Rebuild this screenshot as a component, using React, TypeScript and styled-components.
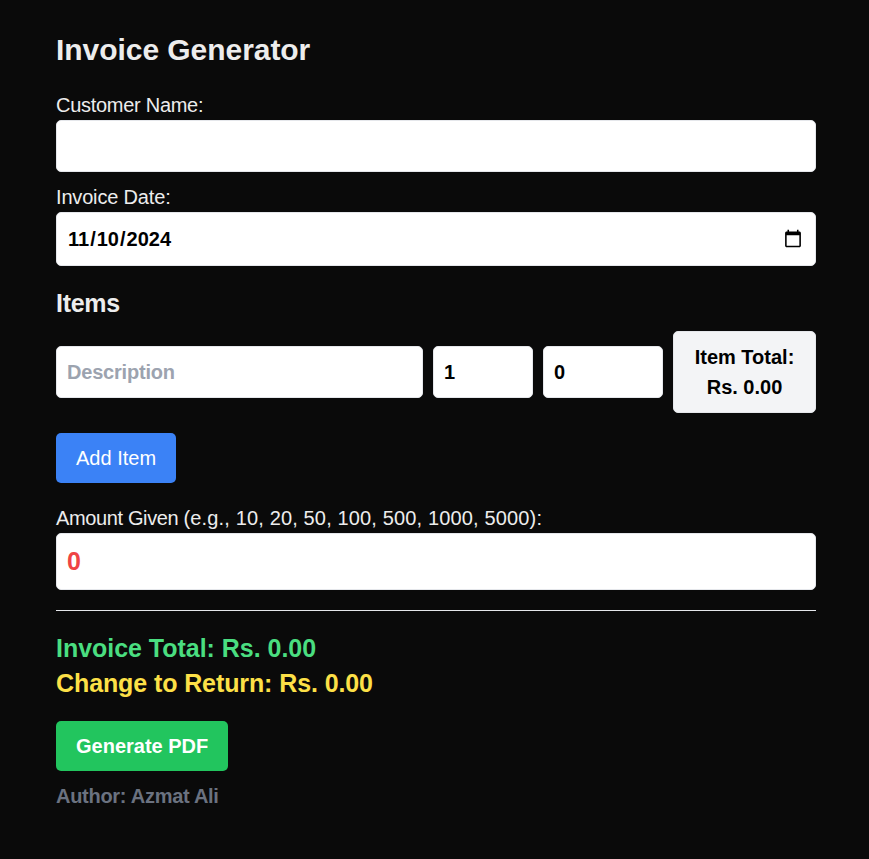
import React, { useState } from 'react';
import styled, { createGlobalStyle } from 'styled-components';

const GlobalStyle = createGlobalStyle`
  *, *::before, *::after { box-sizing: border-box; }
  body {
    margin: 0;
    background: #0a0a0a;
    color: #ededed;
    font: 20px/30px "Liberation Sans", Arial, sans-serif;
  }
  input, button { font: inherit; margin: 0; }
`;

const Page = styled.main`
  min-height: 859px;
  padding: 30px 53px 0 56px;
`;

const Title = styled.h1`
  margin: 0 0 20px;
  font-size: 30px;
  line-height: 40px;
  font-weight: 600;
  letter-spacing: -0.05px;
  color: #ededed;
`;

const Field = styled.label<{ $gap: number }>`
  display: block;
  margin-bottom: ${(p) => p.$gap}px;
`;

const Caption = styled.span<{ $tracking: number }>`
  letter-spacing: ${(p) => p.$tracking}px;
`;

const Input = styled.input<{ $h: number }>`
  display: block;
  width: 100%;
  min-width: 0;
  height: ${(p) => p.$h}px;
  padding: 10px;
  border: 1px solid #e5e7eb;
  border-radius: 5px;
  background: #fff;
  color: #000;
  font-weight: 600;
  outline: none;
  &::placeholder { color: #9ca3af; opacity: 1; letter-spacing: -0.2px; }
`;

const AmountInput = styled(Input)`
  color: #ef4444;
  font-size: 25px;
`;

const Heading = styled.h2`
  margin: 0 0 10px;
  font-size: 25px;
  line-height: 35px;
  font-weight: 600;
  letter-spacing: -0.3px;
  color: #ededed;
`;

const ItemRow = styled.div`
  display: grid;
  grid-template-columns: 367px 100px 120px 1fr;
  gap: 10px;
  align-items: center;
  margin-bottom: 20px;
`;

const ItemTotal = styled.div`
  display: flex;
  flex-direction: column;
  align-items: center;
  padding: 10px;
  border: 1px solid #e5e7eb;
  border-radius: 5px;
  background: #f3f4f6;
  color: #000;
  font-weight: 600;
`;

const Button = styled.button<{ $color: string; $bold?: boolean }>`
  display: block;
  height: 50px;
  padding: 10px 20px;
  border: 0;
  border-radius: 5px;
  background: ${(p) => p.$color};
  color: #fff;
  font-weight: ${(p) => (p.$bold ? 600 : 400)};
`;

const AmountSection = styled.section`
  margin-top: 20px;
`;

const Summary = styled.section`
  border-top: 1px solid #e5e7eb;
  padding-top: 20px;
  margin-bottom: 20px;
`;

const SummaryLine = styled.p<{ $color: string; $tracking: number }>`
  margin: 0;
  font-size: 25px;
  line-height: 35px;
  font-weight: 600;
  letter-spacing: ${(p) => p.$tracking}px;
  color: ${(p) => p.$color};
`;

const Author = styled.p`
  margin: 10px 0 0;
  font-weight: 600;
  letter-spacing: -0.28px;
  color: #6b7280;
`;

export default function App() {
  const [name, setName] = useState('');
  const [date, setDate] = useState('2024-11-10');
  const [items, setItems] = useState([{ description: '', quantity: '1', price: '0' }]);
  const [given, setGiven] = useState('0');

  const total = items.reduce((sum, i) => sum + Number(i.quantity) * Number(i.price), 0);
  const change = Math.max(0, Number(given) - total);
  const update = (index: number, patch: Partial<(typeof items)[number]>) =>
    setItems(items.map((item, i) => (i === index ? { ...item, ...patch } : item)));

  return (
    <Page>
      <GlobalStyle />
      <Title>Invoice Generator</Title>
      <Field $gap={10}>
        <Caption $tracking={-0.28}>Customer Name:</Caption>
        <Input $h={52} value={name} onChange={(e) => setName(e.target.value)} />
      </Field>
      <Field $gap={20}>
        <Caption $tracking={-0.17}>Invoice Date:</Caption>
        <Input $h={54} type="date" value={date} onChange={(e) => setDate(e.target.value)} />
      </Field>
      <Heading>Items</Heading>
      {items.map((item, i) => (
        <ItemRow key={i}>
          <Input $h={52} placeholder="Description" value={item.description}
            onChange={(e) => update(i, { description: e.target.value })} />
          <Input $h={52} type="number" value={item.quantity}
            onChange={(e) => update(i, { quantity: e.target.value })} />
          <Input $h={52} type="number" value={item.price}
            onChange={(e) => update(i, { price: e.target.value })} />
          <ItemTotal>
            <span>Item Total:</span>
            <span>{`Rs. ${(Number(item.quantity) * Number(item.price)).toFixed(2)}`}</span>
          </ItemTotal>
        </ItemRow>
      ))}
      <Button $color="#3b82f6" onClick={() => setItems([...items, { description: '', quantity: '1', price: '0' }])}>
        Add Item
      </Button>
      <AmountSection>
        <Field $gap={20}>
          <Caption $tracking={-0.37}>Amount Given </Caption>
          <Caption $tracking={0.15}>(e.g., 10, 20, 50, 100, 500, 1000, 5000):</Caption>
          <AmountInput $h={57} type="number" value={given} onChange={(e) => setGiven(e.target.value)} />
        </Field>
      </AmountSection>
      <Summary>
        <SummaryLine $color="#4ade80" $tracking={-0.03}>{`Invoice Total: Rs. ${total.toFixed(2)}`}</SummaryLine>
        <SummaryLine $color="#fde047" $tracking={-0.1}>{`Change to Return: Rs. ${change.toFixed(2)}`}</SummaryLine>
      </Summary>
      <Button $color="#22c55e" $bold>Generate PDF</Button>
      <Author>Author: Azmat Ali</Author>
    </Page>
  );
}
